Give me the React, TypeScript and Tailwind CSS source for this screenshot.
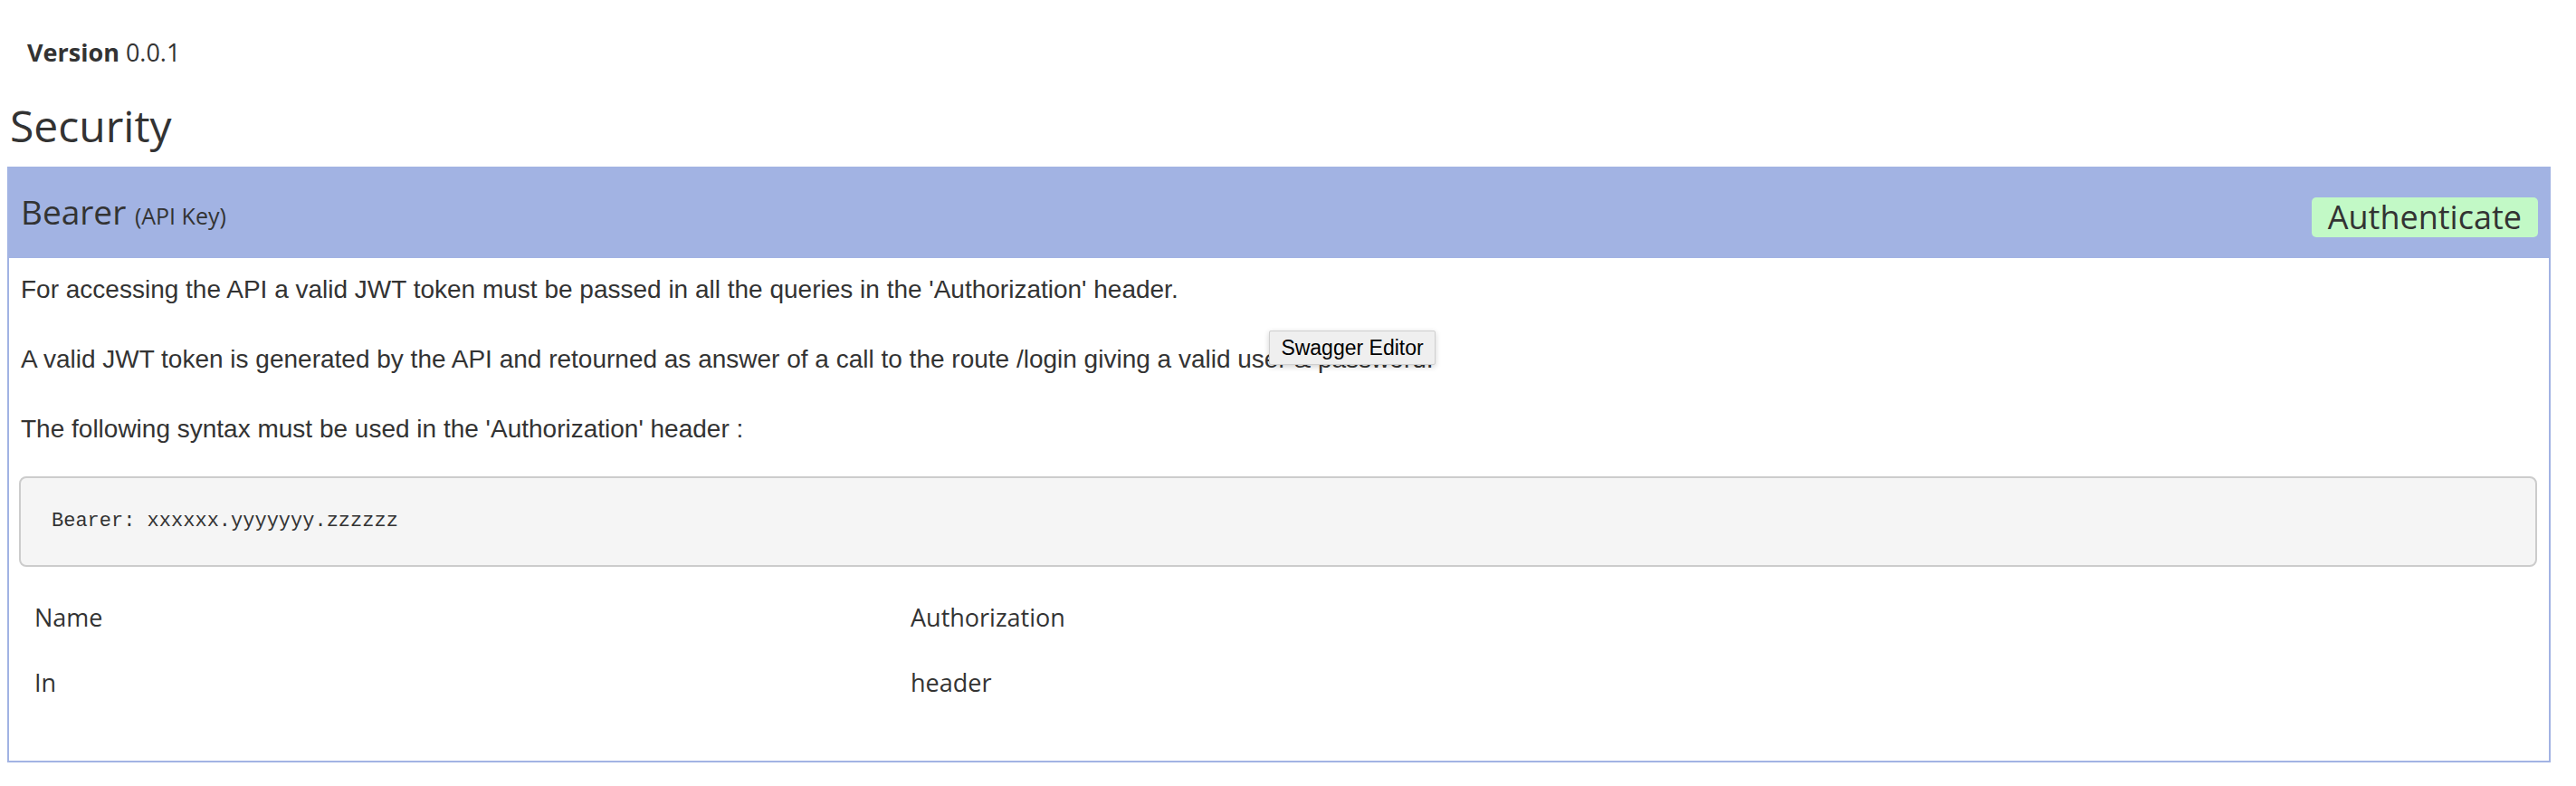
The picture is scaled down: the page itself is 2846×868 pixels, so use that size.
import React from "react";

/* ─── Security definition: one API-key scheme ─── */
const rows: [string, string][] = [
  ["Name", "Authorization"],
  ["In", "header"],
];

const paragraphs = [
  "For accessing the API a valid JWT token must be passed in all the queries in the 'Authorization' header.",
  "A valid JWT token is generated by the API and retourned as answer of a call to the route /login giving a valid user & password.",
  "The following syntax must be used in the 'Authorization' header :",
];

function Tooltip({ label }: { label: string }) {
  return (
    <div className="absolute left-[1402px] top-[365px] w-[184px] h-[38px] flex items-center justify-center bg-[#efefef] border border-[#cfcfcf] rounded-[2px] shadow-[0_2px_6px_rgba(0,0,0,0.18)] font-['Liberation_Sans',Arial,sans-serif] text-[23px] leading-[26px] text-black">
      {label}
    </div>
  );
}

export default function App() {
  return (
    <div className="relative w-[2846px] h-[868px] bg-white text-[#333] font-['Open_Sans',sans-serif] overflow-hidden">
      {/* ── Version line ── */}
      <div className="pt-[40px] pl-[30px] text-[27px] leading-[36px]">
        <span className="font-bold">Version</span> 0.0.1
      </div>

      {/* ── Heading ── */}
      <h2 className="mt-[35px] pl-[11px] text-[48px] leading-[56px] font-normal">Security</h2>

      {/* ── Scheme card ── */}
      <div className="mt-[17px] ml-[8px] w-[2810px] border-2 border-[#a2b3e3]">
        <div className="h-[99px] bg-[#a2b3e3] flex items-center justify-between pl-[13px] pr-[12px]">
          <div className="text-[37px] leading-[44px]">
            Bearer <span className="text-[25px]">(API Key)</span>
          </div>
          <button className="mt-[9px] h-[44px] px-[18px] rounded-[5px] bg-[#c2f9c6] text-[36px] leading-[44px] text-[#333]">
            Authenticate
          </button>
        </div>

        <div className="pt-[18px] pl-[11px] pr-[13px] pb-[50px]">
          <div className="flex flex-col gap-[43px] pl-[2px] font-['Liberation_Sans',Arial,sans-serif] text-[28px] leading-[34px]">
            {paragraphs.map((p) => (
              <p key={p}>{p}</p>
            ))}
          </div>

          <pre className="mt-[35px] h-[100px] px-[34px] py-[35px] bg-[#f5f5f5] border-2 border-[#cccccc] rounded-[8px] font-['Liberation_Mono',monospace] text-[22px] leading-[26px] text-[#333]">
            Bearer: xxxxxx.yyyyyyy.zzzzzz
          </pre>

          <div className="mt-[20px] pl-[17px] grid grid-cols-[968px_1fr] text-[27px] leading-[36px]">
            {rows.map(([k, v]) => (
              <React.Fragment key={k}>
                <div className="py-[18px]">{k}</div>
                <div className="py-[18px]">{v}</div>
              </React.Fragment>
            ))}
          </div>
        </div>
      </div>

      <Tooltip label="Swagger Editor" />
    </div>
  );
}
